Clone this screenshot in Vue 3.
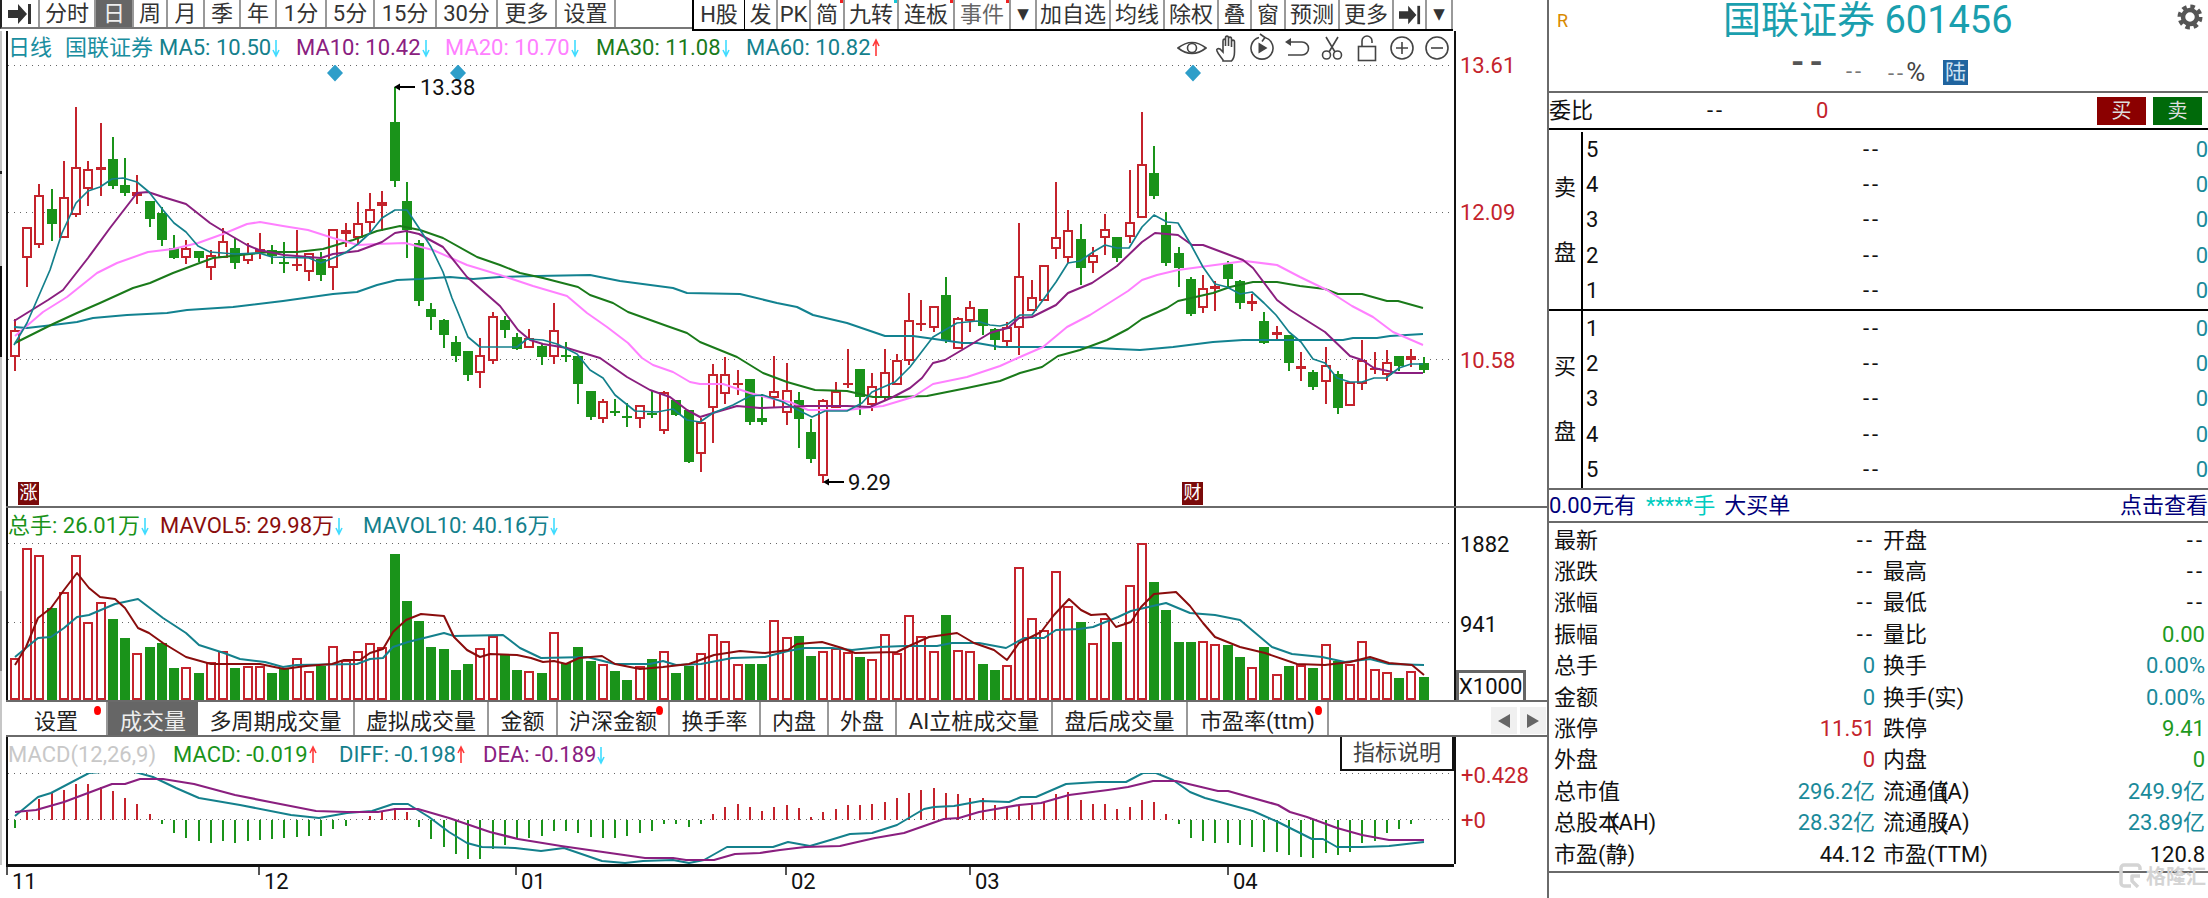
<script setup>
const RED = '#c4232c'
const GREEN = '#1a931a'
const cx = n => Math.round(14.8 + 12.25 * n)

const raw = [
[0,319,331,356,371],[0,228,228,257,287],[0,184,196,244,248],[1,189,209,224,241],[0,161,198,237,237],[0,107,168,214,217],[0,161,170,188,206],[0,123,167,170,196],[1,137,159,186,189],[1,158,185,193,196],
[0,175,192,196,204],[1,201,201,219,227],[1,207,213,240,246],[1,235,248,258,259],[0,240,249,257,264],[1,251,251,258,262],[0,250,256,267,280],[0,228,242,257,257],[1,238,248,263,269],[0,243,254,260,264],
[0,233,249,252,259],[1,245,250,256,264],[1,242,262,263,273],[0,230,264,266,271],[0,253,254,271,281],[1,252,259,275,281],[0,230,230,267,290],[0,223,230,234,247],[0,202,224,237,245],[0,193,210,222,232],
[0,191,202,206,231],[1,87,122,181,187],[1,182,201,230,258],[1,240,243,301,306],[1,303,309,317,330],[1,319,320,335,348],[1,336,342,356,362],[1,351,351,375,381],[0,338,356,372,388],[0,312,317,360,364],
[1,316,320,330,338],[1,333,337,349,350],[0,329,339,347,347],[1,343,346,357,365],[0,303,331,356,364],[1,342,355,356,362],[1,356,356,384,404],[1,391,391,417,420],[0,399,402,418,423],[1,399,411,413,416],
[1,403,416,417,427],[0,406,406,418,428],[1,390,413,415,418],[0,391,393,430,434],[1,400,400,415,416],[1,410,410,462,463],[0,418,423,453,472],[0,364,375,407,443],[0,357,375,393,404],[0,370,383,385,395],
[1,379,379,422,425],[1,394,418,422,425],[0,356,392,397,408],[0,363,391,412,425],[1,392,400,419,448],[1,419,432,459,463],[0,399,401,475,483],[0,382,392,407,408],[0,349,383,385,388],[1,369,369,397,415],
[0,373,387,404,411],[0,349,373,397,400],[0,354,361,384,385],[0,293,321,360,365],[0,300,323,325,331],[0,307,307,327,332],[1,277,295,341,343],[0,317,319,348,348],[0,301,308,320,332],[1,309,309,326,335],
[1,328,329,340,350],[0,322,328,341,346],[0,223,277,327,355],[0,280,298,310,310],[0,266,266,300,300],[0,182,238,248,259],[0,210,231,257,263],[1,224,239,268,285],[0,247,256,262,273],[0,214,230,237,255],
[1,237,237,258,262],[0,170,223,236,243],[0,112,165,217,217],[1,146,173,196,199],[1,212,225,263,266],[1,247,253,268,287],[1,277,279,314,316],[0,275,289,307,313],[0,281,286,289,311],[1,261,264,279,287],
[1,280,281,303,309],[0,294,301,304,311],[1,312,321,343,344],[0,326,332,335,339],[1,335,335,363,371],[0,352,366,369,381],[1,370,372,387,390],[0,347,366,381,404],[1,371,374,408,414],[0,383,383,405,406],
[0,340,361,383,390],[0,352,368,370,374],[0,350,363,374,381],[1,356,356,366,371],[0,349,356,360,367],[1,357,363,370,373]
]
const candles = raw.map((c, n) => {
  const x = cx(n), [g, h, t, b, l] = c
  return { n, x, g, h, t, b, l, flat: b - t < 5 }
})

const volTops = [658,548,555,608,592,555,622,602,619,638,653,647,643,668,667,673,662,651,668,666,666,673,668,658,671,666,646,660,651,643,647,554,601,621,647,649,670,664,648,636,655,670,671,673,632,663,647,661,664,671,680,666,659,651,673,666,653,634,641,664,664,664,620,637,636,656,651,648,652,657,659,634,653,615,636,651,615,650,651,664,670,665,567,618,630,571,606,622,643,618,642,585,543,582,610,642,642,641,644,645,657,667,647,674,666,665,668,644,661,664,641,669,672,678,671,677]
const vols = candles.map((c, i) => ({ x: c.x, g: c.g, t: volTops[i] }))

const macdTips = [828,812,799,793,790,784,784,787,791,798,804,814,824,833,838,841,843,841,843,841,840,839,838,837,836,836,829,826,820,816,812,808,812,827,839,847,854,859,859,849,845,839,838,836,831,831,833,837,838,838,836,833,831,824,824,827,824,814,807,804,807,811,807,805,808,817,812,809,805,805,804,802,798,793,790,788,793,794,798,798,805,806,805,805,802,794,792,800,804,804,809,807,800,802,814,824,838,841,843,843,845,847,852,852,855,857,858,853,855,852,843,841,833,829,824,820]
const hist = macdTips.map((t, i) => ({ x: cx(i), t })).filter(h => h.t !== 820)

const maLines = [
  { c: '#128290', w: 2, d: '14,327 27,328 53,325 77,322 93,318 127,315 167,313 187,310 233,307 283,301 333,294 357,292 377,285 397,280 420,279 450,277 473,279 500,277 537,276 590,275 620,281 673,288 687,293 740,294 777,303 797,307 813,315 847,323 885,336 913,336 963,343 977,343 1000,347 1080,347 1117,349 1140,350 1173,347 1213,342 1243,340 1343,340 1353,338 1377,338 1390,336 1423,334' },
  { c: '#1a7a1a', w: 2, d: '15,343 53,324 77,313 100,303 133,288 150,283 173,273 213,258 250,254 270,252 297,252 323,249 353,240 377,231 400,226 420,230 443,238 477,257 500,265 520,273 543,278 578,287 590,295 613,303 628,312 667,326 687,333 700,342 737,357 763,373 787,382 815,390 847,391 873,397 897,397 927,396 967,388 1000,381 1020,373 1042,367 1058,356 1080,350 1107,340 1128,329 1142,319 1167,308 1178,301 1213,293 1230,287 1253,282 1277,282 1300,286 1325,289 1338,294 1362,294 1387,301 1398,301 1423,308' },
  { c: '#ff80ff', w: 2, d: '15,336 43,312 67,297 97,273 117,263 148,252 173,249 198,243 223,234 247,224 260,222 283,226 308,230 333,238 358,245 377,244 405,243 433,250 467,265 500,275 533,286 567,296 587,313 607,327 628,343 642,358 653,365 673,372 690,382 700,384 723,384 750,393 773,399 790,402 808,410 847,410 883,406 913,397 933,384 967,377 1000,366 1020,357 1043,347 1067,327 1090,315 1128,291 1142,280 1157,275 1178,270 1215,265 1245,261 1277,265 1300,277 1327,290 1352,306 1373,317 1393,332 1423,345' },
  { c: '#8a1f7f', w: 2, d: '14,321 48,300 63,290 88,258 110,228 137,193 148,192 163,197 186,204 210,223 223,231 247,245 259,250 284,255 309,257 321,258 333,254 358,251 382,242 395,233 406,231 419,234 443,247 467,277 500,306 518,330 530,340 543,344 567,348 600,358 627,377 650,390 670,397 687,410 700,417 713,413 737,406 760,408 807,406 847,406 870,407 893,397 910,388 922,378 933,363 945,360 967,347 990,333 1000,330 1008,328 1019,318 1032,317 1056,305 1068,293 1092,283 1117,266 1142,242 1155,233 1178,235 1192,245 1203,245 1227,254 1243,260 1253,268 1277,300 1290,310 1325,332 1350,356 1362,360 1374,368 1397,373 1423,373' },
  { c: '#14808c', w: 1.7, d: '14,345 27,323 37,300 50,270 62,233 76,203 88,191 100,187 112,179 123,178 137,182 149,192 163,210 174,223 186,232 198,246 210,252 235,254 259,253 272,257 309,258 321,263 333,258 345,253 358,244 370,233 382,218 395,210 407,210 419,228 431,247 443,272 452,298 457,310 468,337 480,347 517,347 527,339 543,340 557,344 577,354 590,370 603,378 615,395 635,411 657,412 673,409 687,420 700,422 713,413 733,405 750,396 763,395 783,402 800,411 812,417 825,411 847,411 862,403 872,392 895,382 910,367 933,337 957,323 977,321 990,325 1000,326 1008,324 1020,315 1032,315 1043,300 1056,282 1068,263 1080,261 1093,252 1105,245 1117,248 1129,248 1142,227 1154,215 1167,222 1178,223 1190,243 1203,267 1215,284 1227,287 1240,294 1252,292 1264,303 1276,315 1289,332 1301,342 1313,359 1325,363 1337,378 1350,382 1362,382 1374,378 1386,378 1399,368 1411,364 1423,364' }
]
const volLines = [
  { c: '#14808c', w: 2, d: '15,657 38,638 51,637 64,628 77,617 89,615 115,604 138,599 163,618 186,633 199,645 224,653 240,659 265,662 283,667 296,665 357,664 370,659 383,658 393,647 408,642 444,633 454,636 503,635 520,648 541,658 587,657 615,664 650,664 663,661 676,665 701,664 732,658 765,657 788,651 805,648 832,648 852,650 880,647 904,646 937,646 952,643 979,643 1006,648 1024,638 1044,638 1056,630 1079,629 1093,627 1118,617 1131,611 1166,603 1190,613 1215,615 1240,620 1272,647 1292,654 1322,657 1345,662 1370,659 1389,664 1424,665' },
  { c: '#8a0d0d', w: 2, d: '15,665 26,647 38,618 51,608 64,590 77,573 89,588 100,597 115,599 125,608 138,628 149,633 163,643 186,657 211,664 260,664 284,669 306,666 332,664 344,660 360,660 370,653 383,649 393,632 406,620 421,614 444,616 454,637 467,650 480,657 490,654 517,655 531,658 543,662 554,661 566,664 579,658 602,656 615,664 640,669 663,667 689,664 714,655 740,651 765,653 788,650 797,644 822,642 842,648 855,653 897,652 909,646 929,637 957,633 974,643 994,650 1007,660 1019,643 1041,632 1054,615 1069,599 1081,610 1091,615 1106,614 1116,627 1131,622 1141,607 1154,594 1176,592 1190,606 1203,623 1215,637 1240,647 1265,653 1297,664 1325,665 1350,662 1370,657 1389,663 1412,665 1424,675' }
]
const macdLines = [
  { c: '#14808c', w: 2, d: '15,816 38,797 51,793 89,773 102,772 135,772 153,777 176,788 199,798 240,805 291,815 319,818 347,813 372,811 393,804 408,804 429,817 449,832 467,843 482,847 515,848 541,851 564,848 602,861 625,863 643,861 673,860 689,863 704,860 727,847 740,847 773,847 788,842 810,846 827,841 850,834 872,833 897,825 924,809 934,807 954,806 981,801 1009,802 1021,797 1036,797 1066,784 1098,782 1126,782 1143,773 1156,773 1173,780 1190,792 1205,798 1253,811 1278,822 1312,839 1323,839 1337,847 1362,847 1389,846 1424,842' },
  { c: '#8a1f7f', w: 2.2, d: '15,812 36,810 64,802 112,784 125,784 140,779 163,779 194,784 235,795 270,802 316,811 347,812 378,812 395,809 418,809 449,818 490,832 518,839 561,846 610,853 645,858 673,858 686,860 714,860 735,854 760,853 780,850 805,847 840,846 875,838 904,833 944,819 959,818 979,812 1019,805 1041,803 1069,795 1108,790 1128,787 1153,781 1176,781 1218,791 1228,791 1278,805 1290,812 1307,817 1337,828 1362,835 1389,840 1424,840' }
]

const toolsLeft = [
  { t: '分时', w: 56 }, { t: '日', w: 38, active: true }, { t: '周', w: 34 }, { t: '月', w: 37 }, { t: '季', w: 36 }, { t: '年', w: 36 },
  { t: '1分', w: 50 }, { t: '5分', w: 48 }, { t: '15分', w: 62 }, { t: '30分', w: 61 }, { t: '更多', w: 59 }, { t: '设置', w: 59 }
]
const toolsRight = [
  { t: 'H股', w: 53, hl: true }, { t: '发', w: 33 }, { t: 'PK', w: 33 }, { t: '简', w: 34, dot: '#e22' }, { t: '九转', w: 54, dot: '#12c8d8' },
  { t: '连板', w: 56, dot: '#e22' }, { t: '事件', w: 56, dot: '#e22', dim: true }, { t: '▼', w: 26, tri: true }, { t: '加自选', w: 74 }, { t: '均线', w: 54 },
  { t: '除权', w: 54 }, { t: '叠', w: 33 }, { t: '窗', w: 34 }, { t: '预测', w: 54 }, { t: '更多', w: 54 }
]
const mainLegend = [
  { t: '日线', c: '#1a8ea0', w: 57 }, { t: '国联证券', c: '#1a8ea0', w: 94 },
  { t: 'MA5: 10.50', c: '#14808c', w: 137, d: 0 }, { t: 'MA10: 10.42', c: '#8a2080', w: 149, d: 0 },
  { t: 'MA20: 10.70', c: '#ff80ff', w: 151, d: 0 }, { t: 'MA30: 11.08', c: '#1a7a1a', w: 150, d: 0 },
  { t: 'MA60: 10.82', c: '#14808c', w: 150, d: 1 }
]
const volLegend = [
  { t: '总手: 26.01万', c: GREEN, w: 152, d: 0 }, { t: 'MAVOL5: 29.98万', c: '#8a0d0d', w: 203, d: 0 }, { t: 'MAVOL10: 40.16万', c: '#14808c', w: 230, d: 0 }
]
const macdLegend = [
  { t: 'MACD(12,26,9)', c: '#c8c8c8', w: 165 }, { t: 'MACD: -0.019', c: GREEN, w: 166, d: 1 },
  { t: 'DIFF: -0.198', c: '#14808c', w: 144, d: 1 }, { t: 'DEA: -0.189', c: '#8a2080', w: 140, d: 0 }
]
const tabs = [
  { t: '设置', w: 102, dot: true }, { t: '成交量', w: 90, active: true }, { t: '多周期成交量', w: 157 }, { t: '虚拟成交量', w: 134 },
  { t: '金额', w: 69 }, { t: '沪深金额', w: 112, dot: true }, { t: '换手率', w: 91 }, { t: '内盘', w: 68 }, { t: '外盘', w: 68 },
  { t: 'AI立桩成交量', w: 156 }, { t: '盘后成交量', w: 135 }, { t: '市盈率(ttm)', w: 141, dot: true }
]
const xTicks = [
  { x: 0, t: '11' }, { x: 252, t: '12' }, { x: 509, t: '01' }, { x: 779, t: '02' }, { x: 963, t: '03' }, { x: 1221, t: '04' }
]
const xCells = xTicks.map((k, i) => ({ t: k.t, w: (i < xTicks.length - 1 ? xTicks[i + 1].x : 1448) - k.x }))
const levels = [5, 4, 3, 2, 1]
const buyLevels = [1, 2, 3, 4, 5]
const stats = [
  ['最新', '--', '', '开盘', '--', ''],
  ['涨跌', '--', '', '最高', '--', ''],
  ['涨幅', '--', '', '最低', '--', ''],
  ['振幅', '--', '', '量比', '0.00', 'g'],
  ['总手', '0', 't', '换手', '0.00%', 't'],
  ['金额', '0', 't', '换手(实)', '0.00%', 't'],
  ['涨停', '11.51', 'rd', '跌停', '9.41', 'g'],
  ['外盘', '0', 'rd', '内盘', '0', 'g'],
  ['总市值', '296.2亿', 't', '流通值|(A)', '249.9亿', 't'],
  ['总股本|(AH)', '28.32亿', 't', '流通股|(A)', '23.89亿', 't'],
  ['市盈(静)', '44.12', '', '市盈(TTM)', '120.8', '']
]
const splitLabel = s => s.split('|')
</script>

<template>
  <div class="root">
    <div class="left">
      <div class="toolbar">
        <div class="tb-left">
          <div class="tool first">
            <svg width="26" height="24" viewBox="0 0 26 24"><path d="M1 8h10V2l9 10-9 10v-6H1z" fill="#333" /><rect x="21" y="2" width="3" height="20" fill="#333" /></svg>
          </div>
          <div v-for="b in toolsLeft" :key="b.t" class="tool" :class="{ active: b.active }" :style="{ width: b.w + 'px' }">{{ b.t }}</div>
        </div>
        <div class="tb-gap"></div>
        <div class="tb-right">
          <div v-for="b in toolsRight" :key="b.t + b.w" class="tool" :class="{ hl: b.hl, dim: b.dim, tri: b.tri }" :style="{ width: b.w + 'px' }">
            {{ b.t }}<i v-if="b.dot" class="corner" :style="{ background: b.dot }"></i>
          </div>
          <div class="tool ic33">
            <svg width="24" height="22" viewBox="0 0 26 24"><path d="M1 8h10V2l9 10-9 10v-6H1z" fill="#333" /><rect x="21" y="2" width="3" height="20" fill="#333" /></svg>
          </div>
          <div class="tool tri w26">▼</div>
        </div>
      </div>

      <div class="charts">
        <div class="gutter"></div>
        <div class="panes">
          <!-- main pane -->
          <div class="pane">
            <div class="plot">
              <div class="legend h34">
                <span v-for="l in mainLegend" :key="l.t" class="li" :style="{ color: l.c, width: l.w + 'px' }">{{ l.t }}<svg v-if="l.d !== undefined" class="arr" width="8" height="20" viewBox="0 0 8 20"><path v-if="l.d === 0" d="M4 2v15M1 12l3 6 3-6" fill="none" stroke="#40dcff" stroke-width="1.6" /><path v-else d="M4 18V3M1 8l3-6 3 6" fill="none" stroke="#ff3a3a" stroke-width="1.6" /></svg></span>
                <div class="icons">
                  <svg viewBox="0 0 30 30"><path d="M1 15Q15 4 29 15Q15 26 1 15Z" /><circle cx="15" cy="15" r="4.500" /></svg>
                  <svg viewBox="0 0 30 30"><path d="M11 27c-2-3-5-6-6-9-1-2 1-3 3-2l3 3V8c0-2.500 2.500-2.500 2.500 0v5-8c0-2.500 3-2.500 3 0v8-7c0-2.500 3-2.500 3 0v8-5c0-2.500 3-2.500 3 0v10c0 5-1 7-3 9H11z" /></svg>
                  <svg viewBox="0 0 30 30"><path d="M18 4.500a11 11 0 1 1-6 0M13 1l5 3.500-3 4" /><path d="M11.500 9.500l9 5.500-9 5.500z" class="fill" /></svg>
                  <svg viewBox="0 0 30 30"><path d="M9 9h11a6.500 6.500 0 0 1 0 13H6" /><path d="M9 5v8L3 9z" class="fill" /></svg>
                  <svg viewBox="0 0 30 30"><circle cx="9.500" cy="22" r="4" /><circle cx="20.500" cy="22" r="4" /><path d="M12 19L21 4M18 19L9 4" /></svg>
                  <svg viewBox="0 0 30 30"><rect x="6.500" y="13.500" width="17" height="14" /><path d="M10 13.500V8a5 5 0 0 1 10 0v2" /></svg>
                  <svg viewBox="0 0 30 30"><circle cx="15" cy="15" r="11" /><path d="M9 15h12M15 9v12" /></svg>
                  <svg viewBox="0 0 30 30"><circle cx="15" cy="15" r="11" /><path d="M9 15h12" /></svg>
                </div>
              </div>
              <svg class="chart" width="1446" height="441" viewBox="8 65 1446 441">
                <g class="grid">
                  <line x1="8" x2="1454" y1="65.5" y2="65.5" />
                  <line x1="8" x2="1454" y1="212.5" y2="212.5" />
                  <line x1="8" x2="1454" y1="359.5" y2="359.5" />
                </g>
                <g shape-rendering="crispEdges">
                  <template v-for="c in candles" :key="c.n">
                    <template v-if="c.g">
                      <rect :x="c.x - 1" :y="c.h" width="2" :height="c.l - c.h" :fill="GREEN" />
                      <rect :x="c.x - 5" :y="c.t" width="10" :height="Math.max(c.b - c.t, 2)" :fill="GREEN" />
                    </template>
                    <template v-else>
                      <rect :x="c.x - 1" :y="c.h" width="2" :height="Math.max(c.t - c.h, 0)" :fill="RED" />
                      <rect :x="c.x - 1" :y="c.b" width="2" :height="Math.max(c.l - c.b, 0)" :fill="RED" />
                      <rect v-if="c.flat" :x="c.x - 5" :y="c.t" width="10" :height="Math.max(c.b - c.t, 2)" :fill="RED" />
                      <rect v-else :x="c.x - 4" :y="c.t" width="8" :height="c.b - c.t" fill="#fff" :stroke="RED" stroke-width="2" />
                    </template>
                  </template>
                </g>
                <polyline v-for="(m, i) in maLines" :key="i" :points="m.d" fill="none" :stroke="m.c" :stroke-width="m.w" stroke-linejoin="round" />
                <path d="M327 73l8-8.500 8 8.500-8 8.500zM450 73l8-8.500 8 8.500-8 8.500zM1185 73l8-8.500 8 8.500-8 8.500z" fill="#2e9ec9" />
                <g fill="#000">
                  <path d="M394 87l6-3.500v2.500h15v2h-15v2.500z" />
                  <path d="M823 482l6-3.500v2.500h15v2h-15v2.500z" />
                </g>
                <text x="420" y="95" class="ann">13.38</text>
                <text x="848" y="490" class="ann">9.29</text>
                <g>
                  <rect x="18" y="482" width="21" height="23" fill="#7a0a0a" />
                  <text x="28.500" y="499" class="mark">涨</text>
                  <rect x="1182" y="482" width="21" height="23" fill="#7a0a0a" />
                  <text x="1192.500" y="499" class="mark">财</text>
                </g>
              </svg>
            </div>
            <div class="axis main-axis">
              <span>13.61</span><span>12.09</span><span>10.58</span>
            </div>
          </div>
          <div class="hline"></div>

          <!-- volume pane -->
          <div class="pane">
            <div class="plot">
              <div class="legend h35">
                <span v-for="l in volLegend" :key="l.t" class="li" :style="{ color: l.c, width: l.w + 'px' }">{{ l.t }}<svg class="arr" width="8" height="20" viewBox="0 0 8 20"><path d="M4 2v15M1 12l3 6 3-6" fill="none" stroke="#40dcff" stroke-width="1.6" /></svg></span>
              </div>
              <svg class="chart" width="1446" height="157" viewBox="8 543 1446 157">
                <g class="grid">
                  <line x1="8" x2="1454" y1="543.5" y2="543.5" />
                  <line x1="8" x2="1454" y1="622.5" y2="622.5" />
                </g>
                <g shape-rendering="crispEdges">
                  <template v-for="v in vols" :key="v.x">
                    <rect v-if="v.g" :x="v.x - 5" :y="v.t" width="10" :height="700 - v.t" :fill="GREEN" />
                    <rect v-else :x="v.x - 4" :y="v.t + 1" width="8" :height="698 - v.t" fill="#fff" :stroke="RED" stroke-width="2" />
                  </template>
                </g>
                <polyline v-for="(m, i) in volLines" :key="i" :points="m.d" fill="none" :stroke="m.c" :stroke-width="m.w" stroke-linejoin="round" />
              </svg>
            </div>
            <div class="axis vol-axis">
              <span>1882</span><span>941</span>
              <div class="x1000">X1000</div>
            </div>
          </div>

          <!-- tabs -->
          <div class="tabs">
            <div v-for="t in tabs" :key="t.t" class="tab" :class="{ active: t.active }" :style="{ width: t.w + 'px' }">
              {{ t.t }}<i v-if="t.dot" class="reddot"></i>
            </div>
            <div class="scroll">
              <div class="sbtn"><svg width="12" height="14" viewBox="0 0 12 14"><path d="M12 0v14L0 7z" fill="#666" /></svg></div>
              <div class="sbtn"><svg width="12" height="14" viewBox="0 0 12 14"><path d="M0 0v14l12-7z" fill="#666" /></svg></div>
            </div>
          </div>

          <!-- macd pane -->
          <div class="pane">
            <div class="plot">
              <div class="legend h36">
                <span v-for="l in macdLegend" :key="l.t" class="li" :style="{ color: l.c, width: l.w + 'px' }">{{ l.t }}<svg v-if="l.d !== undefined" class="arr" width="8" height="20" viewBox="0 0 8 20"><path v-if="l.d === 0" d="M4 2v15M1 12l3 6 3-6" fill="none" stroke="#40dcff" stroke-width="1.6" /><path v-else d="M4 18V3M1 8l3-6 3 6" fill="none" stroke="#ff3a3a" stroke-width="1.6" /></svg></span>
                <div class="explain">指标说明</div>
              </div>
              <svg class="chart" width="1446" height="91" viewBox="8 773 1446 91">
                <g class="grid">
                  <line x1="8" x2="1454" y1="773.5" y2="773.5" />
                  <line x1="8" x2="1454" y1="819.5" y2="819.5" />
                </g>
                <g shape-rendering="crispEdges">
                  <rect v-for="h in hist" :key="h.x" :x="h.x - 1" :y="Math.min(h.t, 820)" width="2" :height="Math.abs(h.t - 820)" :fill="h.t < 820 ? RED : GREEN" />
                </g>
                <polyline v-for="(m, i) in macdLines" :key="i" :points="m.d" fill="none" :stroke="m.c" :stroke-width="m.w" stroke-linejoin="round" />
              </svg>
            </div>
            <div class="axis macd-axis">
              <span>+0.428</span><span>+0</span>
            </div>
          </div>

          <div class="xaxis">
            <div v-for="x in xCells" :key="x.t" class="xcell" :style="{ width: x.w + 'px' }">{{ x.t }}</div>
          </div>
        </div>
      </div>
    </div>

    <div class="right">
      <div class="header">
        <div class="h-top">
          <span class="rlogo">R</span>
          <span class="title">国联证券 601456</span>
          <svg class="gear" width="26" height="26" viewBox="0 0 26 26">
            <circle cx="13" cy="13" r="10.500" fill="none" stroke="#555" stroke-width="4" stroke-dasharray="4.500 3.750" />
            <circle cx="13" cy="13" r="7" fill="none" stroke="#555" stroke-width="4.500" />
          </svg>
        </div>
        <div class="h-sub">
          <span class="big-dash">--</span>
          <span class="small-dash">--</span>
          <span class="small-dash pct"><b>--</b>%</span>
          <span class="lu">陆</span>
        </div>
      </div>
      <div class="weibi">
        <span class="wb-l">委比</span>
        <span class="wb-a dash">--</span>
        <span class="wb-b">0</span>
        <span class="btn buy">买</span>
        <span class="btn sell">卖</span>
      </div>
      <div class="book sell-b">
        <div class="side"><span>卖</span><span>盘</span></div>
        <div class="rows">
          <div v-for="n in levels" :key="n" class="brow"><span class="bn">{{ n }}</span><span class="bp dash">--</span><span class="bv">0</span></div>
        </div>
      </div>
      <div class="book buy-b">
        <div class="side"><span>买</span><span>盘</span></div>
        <div class="rows">
          <div v-for="n in buyLevels" :key="n" class="brow"><span class="bn">{{ n }}</span><span class="bp dash">--</span><span class="bv">0</span></div>
        </div>
      </div>
      <div class="bigorder">
        <span class="navy">0.00元有</span>
        <span class="cy">*****手</span>
        <span class="navy">大买单</span>
        <span class="navy end">点击查看</span>
      </div>
      <div class="stats">
        <div v-for="s in stats" :key="s[0]" class="srow">
          <span class="sl">{{ splitLabel(s[0])[0] }}<em v-if="splitLabel(s[0])[1]">{{ splitLabel(s[0])[1] }}</em></span>
          <span class="sv v1" :class="[s[2], { dash: s[1] === '--' }]">{{ s[1] }}</span>
          <span class="sl l2">{{ splitLabel(s[3])[0] }}<em v-if="splitLabel(s[3])[1]">{{ splitLabel(s[3])[1] }}</em></span>
          <span class="sv v2" :class="[s[5], { dash: s[4] === '--' }]">{{ s[4] }}</span>
        </div>
      </div>
      <div class="watermark">
        <svg width="24" height="26" viewBox="0 0 24 26"><path d="M21 7V5a3 3 0 0 0-3-3H5a3 3 0 0 0-3 3v15a3 3 0 0 0 3 3h7M21 13h-8v5l6 6" fill="none" stroke="#d4d4d4" stroke-width="3.500" stroke-linejoin="round" /></svg>
        <span>格隆汇</span>
      </div>
    </div>
  </div>
</template>

<style>
html, body { margin: 0; background: #fff; }
</style>

<style scoped>
.root {
  display: flex;
  width: 2208px;
  height: 898px;
  overflow: hidden;
  background: #fff;
  color: #111;
  font-family: Roboto, "Noto Sans CJK SC", sans-serif;
  font-size: 22px;
}
.left { width: 1547px; flex: none; display: flex; flex-direction: column; }

/* toolbar */
.toolbar { display: flex; height: 31px; flex: none; }
.tb-left { display: flex; height: 27px; border-bottom: 2px solid #777; border-left: 2px solid #222; }
.tb-gap { width: 76px; height: 27px; border-bottom: 2px solid #777; }
.tb-right { display: flex; height: 29px; border-bottom: 2px solid #000; }
.tool {
  position: relative;
  box-sizing: border-box;
  display: flex;
  align-items: center;
  justify-content: center;
  height: 100%;
  border-right: 2px solid #999;
  color: #333;
  line-height: 1;
  white-space: nowrap;
}
.first { width: 38px; }
.ic33 { width: 33px; }
.w26 { width: 26px; }
.tool.active { background: #666; color: #eee; }
.tool.hl { border-left: 2px solid #000; border-right: 1px solid #000; }
.tool.dim { color: #666; }
.tool.tri { font-family: "DejaVu Sans", sans-serif; font-size: 15px; color: #333; }
.corner { position: absolute; right: 0; top: 0; width: 3px; height: 3px; }

/* chart area */
.charts { display: flex; flex: 1; }
.gutter {
  width: 2px;
  margin-right: 4px;
  flex: none;
  height: 834px;
  background: linear-gradient(#c6c6c6 0 140px, #222 140px 143px, #c6c6c6 143px 235px, #111 235px 326px, #c6c6c6 326px 560px, #888 560px 640px, #c6c6c6 640px);
}
.panes { display: flex; flex-direction: column; width: 1541px; }
.pane { display: flex; }
.plot {
  width: 1446px;
  flex: none;
  border-left: 2px solid #111;
  border-right: 2px solid #111;
}
.chart { display: block; }
.legend { display: flex; align-items: center; }
.legend .li:first-child { margin-left: -1px; }
.h34 { height: 34px; }
.h35 { height: 35px; }
.h36 { height: 36px; }
.li {
  flex: none;
  padding-left: 1px;
  box-sizing: border-box;
  white-space: nowrap;
  line-height: 1;
  display: inline-flex;
  align-items: center;
}
.arr { margin-left: 1px; flex: none; }
.icons { margin-left: auto; display: flex; gap: 5px; padding-right: 2px; }
.icons svg { width: 30px; height: 30px; fill: none; stroke: #444; stroke-width: 1.6; }
.icons svg .fill { fill: #444; stroke: none; }
.grid line { stroke: #666; stroke-width: 1; stroke-dasharray: 1 5; }
.ann { font-size: 22px; fill: #111; }
.mark { font-size: 18px; fill: #fff; text-anchor: middle; font-family: "Noto Sans CJK SC", sans-serif; }

.axis { width: 93px; flex: none; color: #c4232c; display: flex; flex-direction: column; padding-left: 4px; box-sizing: border-box; line-height: 30px; }
.main-axis { padding-top: 20px; gap: 117px; }
.main-axis span:last-child { margin-top: 1px; }
.hline { height: 2px; background: #6a6a6a; width: 1541px; }
.vol-axis { color: #111; padding-top: 22px; }
.vol-axis span:nth-child(2) { margin-top: 50px; }
.x1000 {
  margin-top: auto;
  margin-left: -4px;
  box-sizing: border-box;
  width: 70px;
  height: 30px;
  line-height: 28px;
  border: 3px solid #666;
  border-bottom: 0;
  color: #111;
  white-space: nowrap;
}
.tabs {
  display: flex;
  box-sizing: border-box;
  height: 37px;
  width: 1541px;
  border-top: 2px solid #6a6a6a;
  border-bottom: 2px solid #6a6a6a;
}
.tab {
  position: relative;
  box-sizing: border-box;
  flex: none;
  display: flex;
  align-items: center;
  justify-content: center;
  border-right: 2px solid #999;
  color: #222;
  white-space: nowrap;
}
.tab.active { background: #666; color: #eee; border-right: 0; }
.reddot { position: absolute; right: 5px; top: 4px; width: 7px; height: 9px; border-radius: 50%; background: #f00; }
.scroll { margin-left: auto; display: flex; gap: 3px; padding: 5px 1px 0 0; }
.sbtn { width: 26px; height: 27px; background: #f0f0f0; display: flex; align-items: center; justify-content: center; }
.explain {
  margin-left: auto;
  align-self: flex-start;
  box-sizing: border-box;
  width: 114px;
  height: 34px;
  border: 2px solid #111;
  border-top: 0;
  color: #444;
  text-align: center;
  line-height: 32px;
}
.macd-axis { padding-top: 24px; gap: 15px; padding-left: 5px; }
.xaxis {
  display: flex;
  width: 1448px;
  box-sizing: border-box;
  height: 34px;
  border-top: 3px solid #111;
}
.xcell {
  box-sizing: border-box;
  flex: none;
  height: 8px;
  padding: 3px 0 0 4px;
  border-left: 2px solid #555;
  line-height: 24px;
  color: #111;
}

/* right panel */
.right {
  position: relative;
  width: 661px;
  flex: none;
  box-sizing: border-box;
  border-left: 2px solid #6a6a6a;
  display: flex;
  flex-direction: column;
}
.header { box-sizing: border-box; border-bottom: 2px solid #6a6a6a; flex: none; height: 93px; }
.h-top { display: flex; align-items: center; height: 40px; padding-left: 8px; }
.rlogo { color: #d88a00; font-size: 18px; width: 166px; flex: none; }
.title { font-size: 38px; color: #1a9fae; line-height: 40px; white-space: nowrap; }
.gear { margin-left: auto; margin-right: 5px; margin-top: -6px; }
.h-sub { display: flex; align-items: flex-end; padding-left: 242px; height: 46px; color: #555; }
.big-dash { font-size: 34px; font-weight: 700; letter-spacing: 5px; width: 55px; line-height: 34px; height: 42px; color: #555; }
.small-dash { letter-spacing: 3px; width: 42px; line-height: 32px; height: 30px; color: #777; }
.pct { width: 55px; letter-spacing: 0; color: #444; font-size: 26px; white-space: nowrap; }
.pct b { font-weight: 400; letter-spacing: 3px; font-size: 22px; color: #777; }
.lu { width: 25px; height: 25px; background: #20649f; color: #cfe2f2; font-size: 21px; line-height: 25px; text-align: center; margin-bottom: 1px; }
.weibi { position: relative; display: flex; align-items: center; height: 35px; flex: none; border-bottom: 2px solid #000; line-height: 1; }
.wb-l { width: 158px; flex: none; color: #111; }
.wb-a { width: 109px; flex: none; color: #111; }
.wb-b { color: #c4232c; }
.btn { width: 49px; height: 28px; margin-top: 1px; line-height: 28px; text-align: center; color: #ddd; font-size: 20px; }
.buy { background: #8b0000; margin-left: auto; margin-right: 7px; }
.sell { background: #006a0a; margin-right: 6px; }
.dash { letter-spacing: 3px; }
.book { display: flex; flex: none; }
.sell-b { padding-top: 2px; height: 177px; border-bottom: 2px solid #000; }
.buy-b { height: 177px; border-bottom: 2px solid #6a6a6a; }
.side {
  width: 32px;
  flex: none;
  border-right: 2px solid #000;
  display: flex;
  flex-direction: column;
  align-items: center;
  justify-content: center;
  gap: 35px;
  line-height: 30px;
}
.rows { flex: 1; display: flex; flex-direction: column; min-width: 0; }
.brow { position: relative; height: 35.3px; display: flex; align-items: center; line-height: 1; }
.bn { width: 280px; padding-left: 3px; flex: none; box-sizing: border-box; }
.bp { flex: none; width: 20px; }
.bv { margin-left: auto; color: #1a8a9a; }
.bigorder {
  display: flex;
  align-items: center;
  height: 31px;
  flex: none;
  border-bottom: 2px solid #6a6a6a;
  white-space: nowrap;
  line-height: 1;
}
.navy { color: #00007a; }
.cy { color: #00ccc0; margin: 0 9px 0 10px; }
.end { margin-left: auto; }
.stats { margin-top: 2px; height: 346px; flex: none; border-bottom: 2px solid #6a6a6a; }
.srow { display: flex; align-items: center; height: 31.4px; line-height: 1; padding-left: 5px; white-space: nowrap; }
.sl em { font-style: normal; margin-left: -9px; }
.sl { width: 0; flex: none; }
.sv { flex: none; text-align: right; }
.v1 { width: 321px; }
.l2 { margin-left: 8px; }
.v2 { width: 322px; }
.sv.t { color: #1a8a9a; }
.sv.rd { color: #c4232c; }
.sv.g { color: #1e9a1e; }
.watermark {
  position: absolute;
  right: 2px;
  bottom: 8px;
  display: flex;
  align-items: center;
  gap: 3px;
  color: #d4d4d4;
  font-size: 20px;
  font-weight: 700;
}
</style>
